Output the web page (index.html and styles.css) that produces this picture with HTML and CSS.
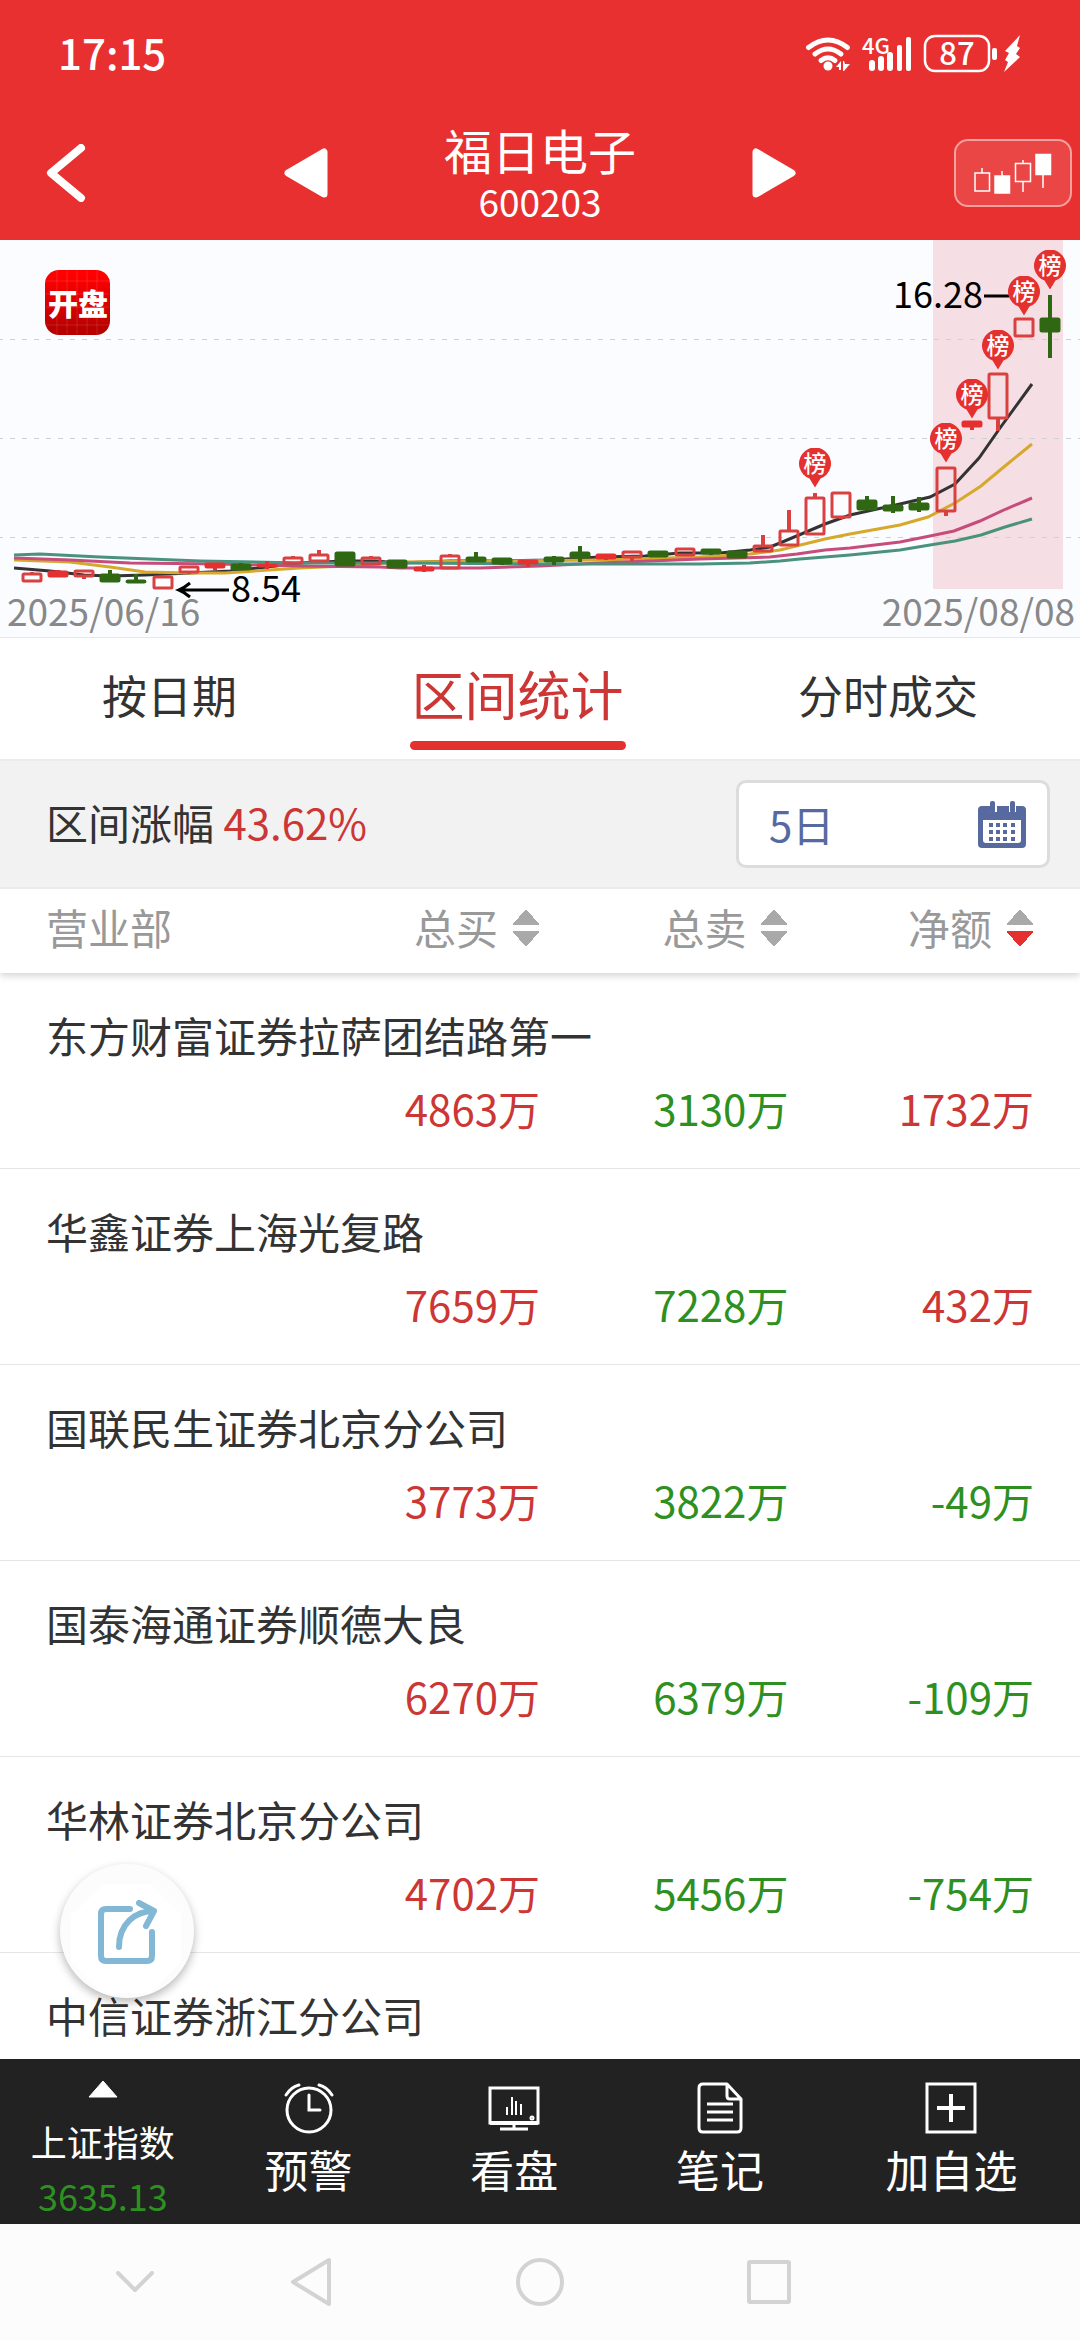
FILE: index.html
```html
<!DOCTYPE html>
<html lang="zh-CN">
<head>
  <meta charset="UTF-8">
  <meta name="viewport" content="width=device-width, initial-scale=1.0">
  <title>福日电子 600203</title>
  <link rel="stylesheet" href="styles.css">
</head>
<body>
  <header class="top">
    <div class="status-bar">
      <span class="clock">17:15</span>
      <svg class="status-icons" viewBox="804 18 220 70" width="220" height="70" fill="#fff">
        <g fill="none" stroke="#fff" stroke-width="5" stroke-linecap="round">
          <path d="M808.500 47.500Q828 32.500 847.500 47.500"/>
          <path d="M815 54Q828 44 841 54"/>
          <path d="M821 60.500Q828 55 835 60.500"/>
        </g>
        <circle cx="828" cy="66" r="4.500"/>
        <path d="M836 67l5-6v9h-2v-3zM843 61l1 0 1 3h5l-6 7h-1z"/>
        <text class="net" x="862" y="54">4G</text>
        <rect x="869" y="60" width="6" height="11" rx="3"/>
        <rect x="878" y="56" width="6" height="15" rx="3"/>
        <rect x="887" y="52" width="6" height="19" rx="3"/>
        <rect x="897" y="45" width="5" height="26" rx="2"/>
        <rect x="906" y="37" width="5" height="34" rx="2"/>
        <rect x="925" y="36" width="64" height="35" rx="10" fill="none" stroke="#fff" stroke-width="2.500"/>
        <rect x="992" y="48" width="5" height="12" rx="2"/>
        <text class="battery" x="957" y="65" text-anchor="middle">87</text>
        <path d="M1020 35l-15 16 4 2-4 7 3 2-4 10 16-15-4-3 4-6-3-2z"/>
      </svg>
    </div>
    <div class="title-bar">
      <button class="back" aria-label="返回">
        <svg viewBox="0 0 40 58" width="40" height="58"><path d="M35 4L5 29L35 54" fill="none" stroke="#fff" stroke-width="8" stroke-linecap="round" stroke-linejoin="round"/></svg>
      </button>
      <div class="switcher">
        <button aria-label="上一只">
          <svg viewBox="0 0 44 50" width="44" height="50"><path d="M40 4V46L4 25Z" fill="#fff" stroke="#fff" stroke-width="7" stroke-linejoin="round"/></svg>
        </button>
        <div class="stock">
          <h1>福日电子</h1>
          <p>600203</p>
        </div>
        <button aria-label="下一只">
          <svg viewBox="0 0 44 50" width="44" height="50"><path d="M4 4V46L40 25Z" fill="#fff" stroke="#fff" stroke-width="7" stroke-linejoin="round"/></svg>
        </button>
      </div>
      <button class="kline-btn" aria-label="K线">
        <svg viewBox="973 150 80 43" width="80" height="43" stroke="#fff" stroke-width="1.500" fill="none">
          <path d="M975 171h14.500v18H975zM982 171v-5M1015.500 161.500h15v18h-15zM1023 161v-3M1023 180v10"/>
          <path d="M995 174h14.500v17H995zM1002 174v-5M1036 152.500h14.500v20H1036zM1043 172v14" fill="#fff"/>
        </svg>
      </button>
    </div>
  </header>

  <svg class="chart" id="chart" viewBox="0 240 1080 397">
    <defs>
      <linearGradient id="logoFill" x1="0" y1="0" x2="0" y2="1">
        <stop offset="0.100" stop-color="#ff0000"/>
        <stop offset="0.900" stop-color="#b80000"/>
      </linearGradient>
      <symbol id="pin" viewBox="0 0 32 40">
        <path d="M16 39.500L10.500 30.500A16 16 0 1 1 21.500 30.500Z" fill="#e53030"/>
        <text x="16" y="24" text-anchor="middle">榜</text>
      </symbol>
    </defs>
    <rect class="range" x="933" y="240" width="130" height="349"/>
    <path class="grid" d="M-2 339.500H1080M-2 438.500H1080M-2 537.500H1080"/>
    <rect x="45" y="270" width="65" height="65" rx="14" fill="url(#logoFill)"/>
    <path class="logo-grid" d="M57 271v63M67 271v63M77 271v63M87 271v63M97 271v63M46 281h63M46 294h63M46 307h63M46 325h63"/>
    <text class="logo-text" x="78" y="315" text-anchor="middle">开盘</text>
    <text class="date" x="7" y="626">2025/06/16</text>
    <text class="date" x="1075" y="626" text-anchor="end">2025/08/08</text>
    <g class="averages">
      <polyline stroke="#333" points="14,568 50,571 84,575 110,576 145,575 190,573 230,571 267,567 300,563 345,561 375,561 400,563 450,561 500,561 550,560 600,557 645,556 680,553 720,553 750,550 770,547 780,543 825,524 850,515 900,504 930,497 955,484 979,458 1000,428 1032,384"/>
      <polyline stroke="#d6a92c" points="14,560 70,562 110,567 145,572 190,573 225,573 300,568 345,566 400,562 500,561 600,560 700,557 750,554 780,550 825,539 850,534 900,525 928,517 955,503 981,486 1005,466 1032,444"/>
      <polyline stroke="#c54c7b" points="14,558 70,560 130,563 220,564 300,566 380,567 400,568 480,568 540,566 600,563 700,559 770,557 797,554 825,550 850,548 900,542 930,536 954,531 980,521 1006,509 1032,498"/>
      <polyline stroke="#4a927c" points="14,555 40,554 100,557 200,561 300,563 400,563 560,564 700,564 750,563 780,561 800,559 850,555 900,550 930,545 955,541 981,535 1005,527 1032,519"/>
    </g>
    <g id="candles"></g>
    <path class="mark" d="M229 590H180M190 583Q184 588 179 590Q184 592 190 597M984 296H1009"/>
    <text class="price" x="231" y="602">8.54</text>
    <text class="price" x="983" y="308" text-anchor="end">16.28</text>
    <g id="pins"></g>
  </svg>

  <nav class="tabs">
    <button>按日期</button>
    <button class="active"><span>区间统计</span></button>
    <button>分时成交</button>
  </nav>

  <div class="filter">
    <p>区间涨幅 <span class="up">43.62%</span></p>
    <label class="period">
      <select aria-label="区间">
        <option>5日</option>
        <option>10日</option>
      </select>
      <svg viewBox="0 0 50 48" width="50" height="48" fill="#566a9f">
        <path d="M5 6h8v6h7V6h12v6h7V6h6q4 0 4 4v34q0 4-4 4H5q-4 0-4-4V10q0-4 4-4zM6 20v20q0 3 3 3h32q3 0 3-3V20z" fill-rule="evenodd"/>
        <rect x="13" y="1" width="5" height="12" rx="2"/>
        <rect x="33" y="1" width="5" height="12" rx="2"/>
        <path d="M12 23h4v4h-4zM19 23h4v4h-4zM26 23h4v4h-4zM34 23h4v4h-4zM12 30h4v4h-4zM19 30h4v4h-4zM26 30h4v4h-4zM34 30h4v4h-4zM12 37h4v4h-4zM19 37h4v4h-4zM26 37h4v4h-4zM34 37h4v4h-4z"/>
      </svg>
    </label>
  </div>

  <main>
    <div class="list">
      <table>
        <colgroup>
          <col>
          <col class="num">
          <col class="num">
          <col class="num last">
        </colgroup>
        <thead>
          <tr>
            <th scope="col">营业部</th>
            <th scope="col"><button class="sort">总买</button></th>
            <th scope="col"><button class="sort">总卖</button></th>
            <th scope="col"><button class="sort desc">净额</button></th>
          </tr>
        </thead>
        <tbody>
          <tr class="name"><th colspan="4">东方财富证券拉萨团结路第一</th></tr>
          <tr class="value"><td></td><td class="up">4863万</td><td class="down">3130万</td><td class="up">1732万</td></tr>
        </tbody>
        <tbody>
          <tr class="name"><th colspan="4">华鑫证券上海光复路</th></tr>
          <tr class="value"><td></td><td class="up">7659万</td><td class="down">7228万</td><td class="up">432万</td></tr>
        </tbody>
        <tbody>
          <tr class="name"><th colspan="4">国联民生证券北京分公司</th></tr>
          <tr class="value"><td></td><td class="up">3773万</td><td class="down">3822万</td><td class="down">-49万</td></tr>
        </tbody>
        <tbody>
          <tr class="name"><th colspan="4">国泰海通证券顺德大良</th></tr>
          <tr class="value"><td></td><td class="up">6270万</td><td class="down">6379万</td><td class="down">-109万</td></tr>
        </tbody>
        <tbody>
          <tr class="name"><th colspan="4">华林证券北京分公司</th></tr>
          <tr class="value"><td></td><td class="up">4702万</td><td class="down">5456万</td><td class="down">-754万</td></tr>
        </tbody>
        <tbody>
          <tr class="name"><th colspan="4">中信证券浙江分公司</th></tr>
        </tbody>
      </table>
    </div>
    <button class="share" aria-label="分享">
      <svg viewBox="0 0 134 134" width="134" height="134">
        <path d="M43 20H90L121 51V98L90 129H43L11 98V51Z" fill="#fff"/>
        <path d="M70 45H46Q41 45 41 50V92Q41 97 46 97H87Q92 97 92 92V68M59 83C59 60 75 47 94 47M79 39L94 47L86 62" fill="none" stroke="#82b8d5" stroke-width="6" stroke-linecap="round" stroke-linejoin="round"/>
      </svg>
    </button>
  </main>

  <footer class="toolbar">
    <a class="index" href="#index">
      <svg viewBox="0 0 30 18" width="30" height="18"><path d="M15 1L29 17H1Z" fill="#fff" stroke="#fff" stroke-linejoin="round"/></svg>
      <span>上证指数</span>
      <span class="down">3635.13</span>
    </a>
    <a href="#alert">
      <svg viewBox="0 0 52 52" width="52" height="52" fill="none" stroke="#fff" stroke-width="3" stroke-linecap="round">
        <circle cx="26" cy="28" r="22"/>
        <path d="M26 13V28H37M3 13Q8 5 16 3M49 13Q44 5 36 3"/>
      </svg>
      <span>预警</span>
    </a>
    <a href="#watch">
      <svg viewBox="0 0 52 52" width="52" height="52" fill="none" stroke="#fff" stroke-width="3">
        <path d="M2 6H50V41H2ZM26 41V46M12 47H40"/>
        <path d="M19 25V33M24 15V33M28 19V33M33 22V33" stroke-width="2"/>
        <path d="M2 41H50" stroke-width="4"/>
        <circle cx="44" cy="36" r="1"/>
      </svg>
      <span>看盘</span>
    </a>
    <a href="#notes">
      <svg viewBox="0 0 52 52" width="52" height="52" fill="none" stroke="#fff" stroke-width="3" stroke-linejoin="round">
        <path d="M8 2H33L47 17V46Q47 50 43 50H9Q5 50 5 46V6Q5 2 9 2ZM33 3V14Q33 17 36 17H46"/>
        <path d="M13 22H39M13 30H39M13 38H39"/>
      </svg>
      <span>笔记</span>
    </a>
    <a href="#add">
      <svg viewBox="0 0 52 52" width="52" height="52" fill="none" stroke="#fff">
        <rect x="2" y="2" width="48" height="48" stroke-width="3"/>
        <path d="M26 12V40M12 26H40" stroke-width="4"/>
      </svg>
      <span>加自选</span>
    </a>
  </footer>

  <div class="nav-bar">
    <button class="hide" aria-label="收起"><svg viewBox="0 0 38 22" width="38" height="22"><path d="M2 2L19 19L36 2"/></svg></button>
    <button aria-label="后退"><svg viewBox="0 0 42 50" width="42" height="50"><path d="M39 3V47L3 25Z"/></svg></button>
    <button aria-label="主页"><svg viewBox="0 0 50 50" width="50" height="50"><circle cx="25" cy="25" r="22"/></svg></button>
    <button aria-label="最近任务"><svg viewBox="0 0 46 46" width="46" height="46"><rect x="3" y="3" width="40" height="40" rx="1"/></svg></button>
  </div>

  <script>
    // type (u: hollow, r: solid red, d: green), body top, body bottom, wick top, wick bottom
    const candles = [
      ['u', 573, 582, 572, 582], ['r', 571, 577, 570, 577], ['u', 570, 577, 570, 579],
      ['d', 574, 582, 570, 582], ['d', 580, 583, 574, 583], ['u', 576, 589, 576, 589],
      ['u', 566, 573, 566, 574], ['r', 563, 568, 563, 570], ['d', 564, 570, 563, 570],
      ['r', 564, 567, 561, 569], ['u', 557, 564, 556, 564], ['u', 554, 562, 550, 562],
      ['d', 552, 566, 552, 566], ['u', 557, 565, 556, 565], ['d', 560, 568, 560, 568],
      ['r', 567, 571, 565, 572], ['u', 555, 569, 554, 569], ['d', 557, 562, 552, 562],
      ['d', 558, 564, 558, 565], ['r', 560, 564, 560, 567], ['d', 557, 562, 556, 565],
      ['d', 552, 558, 546, 562], ['r', 554, 559, 554, 560], ['u', 551, 558, 551, 561],
      ['d', 551, 557, 551, 557], ['u', 548, 556, 548, 556], ['d', 549, 554, 549, 555],
      ['d', 551, 558, 551, 558], ['u', 545, 552, 535, 552], ['u', 530, 546, 510, 546],
      ['u', 497, 535, 493, 535], ['u', 492, 518, 492, 519], ['d', 500, 510, 496, 510],
      ['d', 505, 511, 496, 513], ['d', 503, 510, 497, 512], ['u', 467, 512, 467, 516],
      ['r', 421, 427, 421, 430], ['u', 373, 419, 373, 431], ['u', 318, 337, 318, 337],
      ['d', 318, 332, 295, 358]
    ];
    // candle index -> pin top
    const pins = { 30: 448, 35: 423, 36: 379, 37: 330, 38: 276, 39: 250 };

    const centerX = i => 32 + i * 26.1;
    let shapes = '';
    candles.forEach(([type, top, bottom, high, low], i) => {
      const x = Math.round(centerX(i));
      shapes += `<g class="candle ${type}">
        <path d="M${x} ${high}V${top}M${x} ${bottom}V${low}"/>
        <rect x="${x - 9}" y="${top + 1}" width="18" height="${bottom - top - 2}" rx="1"/>
      </g>`;
    });
    document.getElementById('candles').innerHTML = shapes;

    document.getElementById('pins').innerHTML = Object.keys(pins).map(i =>
      `<use href="#pin" x="${Math.round(centerX(i)) - 16}" y="${pins[i]}" width="32" height="40"/>`
    ).join('');
  </script>
</body>
</html>
```
FILE: styles.css
```css
* {
  box-sizing: border-box;
}

body {
  margin: 0;
  height: 100vh;
  display: flex;
  flex-direction: column;
  background: #ffffff;
  color: #333333;
  font-family: "Noto Sans CJK SC", sans-serif;
  font-size: 42px;
}

button, select {
  font: inherit;
  color: inherit;
  background: none;
  border: 0;
  margin: 0;
  padding: 0;
  cursor: pointer;
}

h1, p {
  margin: 0;
  font-weight: 400;
}

svg {
  display: block;
  flex-shrink: 0;
}

.up {
  color: #cc3635;
}

.down {
  color: #2d9020;
}

/* header */
.top {
  background: #e83030;
  color: #ffffff;
}

.status-bar {
  height: 106px;
  padding: 0 56px 0 58px;
  display: flex;
  align-items: center;
  justify-content: space-between;
}

.clock {
  padding-bottom: 2px;
  font-size: 42px;
  font-weight: 500;
  line-height: 60px;
}

.net {
  font-size: 22px;
  font-weight: 500;
}

.battery {
  font-size: 31px;
  font-weight: 500;
}

.title-bar {
  height: 134px;
  padding: 0 8px 0 46px;
  display: flex;
  align-items: center;
  justify-content: space-between;
  position: relative;
}

.switcher {
  position: absolute;
  left: 50%;
  transform: translateX(-50%);
  width: 512px;
  display: flex;
  align-items: center;
  justify-content: space-between;
}

.stock {
  text-align: center;
}

.stock h1 {
  font-size: 48px;
  line-height: 56px;
}

.stock p {
  font-size: 37px;
  line-height: 48px;
}

.kline-btn {
  width: 118px;
  height: 68px;
  display: flex;
  align-items: center;
  justify-content: center;
  border: 2px solid #f4a0a0;
  border-radius: 14px;
  background: #ea4646;
}

/* chart */
.chart {
  width: 100%;
  background: #fbfcff;
  border-bottom: 1px solid #e6e8ec;
}

.chart .range {
  fill: #f6dfe4;
}

.chart .grid {
  stroke: #cdd0d6;
  stroke-dasharray: 5 7;
}

.chart .logo-grid {
  stroke: #ffffff;
  stroke-opacity: 0.12;
}

.chart .logo-text {
  fill: #ffffff;
  font-size: 30px;
  font-weight: 900;
}

.chart .date {
  fill: #888888;
  font-size: 37px;
}

.chart .price {
  fill: #000000;
  font-size: 36px;
}

.chart .mark {
  fill: none;
  stroke: #000000;
  stroke-width: 3;
}

.averages polyline {
  fill: none;
  stroke-width: 3;
}

.candle {
  fill: none;
  stroke: #d94040;
  stroke-width: 3;
}

.candle path {
  stroke-width: 4;
}

.candle.r {
  fill: #e53030;
  stroke: #e53030;
}

.candle.d {
  fill: #2f6713;
  stroke: #2f6713;
}

#pin text {
  fill: #ffffff;
  font-size: 23px;
  font-weight: 500;
}

/* tabs */
.tabs {
  height: 123px;
  padding: 0 54px;
  display: flex;
  justify-content: space-between;
  border-bottom: 2px solid #ececec;
  font-size: 45px;
}

.tabs button {
  padding: 0 48px 8px;
}

.tabs .active {
  padding: 0;
  color: #cc3635;
  font-size: 53px;
}

.tabs .active span {
  display: block;
  height: 121px;
  padding: 0 2px;
  line-height: 110px;
  position: relative;
}

.tabs .active span::after {
  content: '';
  position: absolute;
  left: 0;
  right: 0;
  bottom: 9px;
  height: 9px;
  border-radius: 5px;
  background: #e53030;
}

/* filter */
.filter {
  height: 128px;
  padding: 0 30px 0 46px;
  display: flex;
  align-items: center;
  justify-content: space-between;
  background: #f2f2f2;
  border-bottom: 2px solid #ebebeb;
}

.filter p {
  padding-bottom: 6px;
}

.period {
  width: 314px;
  height: 88px;
  padding: 0 20px 0 30px;
  display: flex;
  align-items: center;
  background: #ffffff;
  border: 3px solid #dcdcdc;
  border-radius: 10px;
}

.period select {
  flex: 1;
  appearance: none;
  padding-bottom: 2px;
  color: #566a9f;
}

/* list */
main {
  flex: 1;
  min-height: 0;
  position: relative;
}

.list {
  height: 100%;
  overflow-y: auto;
  scrollbar-width: none;
}

table {
  width: 100%;
  table-layout: fixed;
  border-collapse: separate;
  border-spacing: 0;
}

.num {
  width: 23%;
}

.last {
  width: 27%;
}

th, td {
  padding: 0;
  font-weight: 400;
  text-align: right;
}

th:first-child {
  padding-left: 46px;
  text-align: left;
}

th:last-child, td:last-child {
  padding-right: 46px;
}

thead {
  position: sticky;
  top: 0;
  background: #ffffff;
  color: #999999;
  box-shadow: 0 2px 8px rgba(0, 0, 0, 0.2);
}

thead th {
  height: 84px;
  padding-bottom: 8px;
  line-height: 56px;
}

.sort {
  display: inline-flex;
  align-items: center;
  gap: 14px;
}

.sort::after {
  content: '';
  width: 28px;
  height: 38px;
  margin-top: 2px;
  background:
    conic-gradient(from 139deg at 50% 0, #a9a9a9 82deg, transparent 0) top / 28px 16px no-repeat,
    conic-gradient(from -41deg at 50% 100%, #a9a9a9 82deg, transparent 0) bottom / 28px 16px no-repeat;
}

.sort.desc::after {
  background:
    conic-gradient(from 139deg at 50% 0, #a9a9a9 82deg, transparent 0) top / 28px 16px no-repeat,
    conic-gradient(from -41deg at 50% 100%, #e53030 82deg, transparent 0) bottom / 28px 16px no-repeat;
}

.name th {
  padding-top: 34px;
  line-height: 56px;
}

.value td {
  height: 106px;
  padding-top: 17px;
  padding-bottom: 32px;
  line-height: 56px;
  border-bottom: 1px solid #e6e6e6;
}

.share {
  position: absolute;
  left: 60px;
  bottom: 61px;
  border-radius: 50%;
  background: #fcfcfc;
  box-shadow: 0 4px 10px rgba(0, 0, 0, 0.28);
}

/* bottom */
.toolbar {
  height: 165px;
  display: grid;
  grid-template-columns: 4fr 4fr 4fr 4fr 5fr;
  background: #222222;
}

.toolbar a {
  padding-top: 23px;
  display: flex;
  flex-direction: column;
  align-items: center;
  color: #ffffff;
  font-size: 44px;
  line-height: 70px;
  text-decoration: none;
}

.toolbar .index {
  padding-top: 21px;
  gap: 16px;
  font-size: 36px;
  line-height: 54px;
}

.toolbar .index span {
  height: 38px;
}

.toolbar .index .down {
  color: #2d9020;
}

.nav-bar {
  height: 116px;
  display: grid;
  grid-template-columns: 6fr 7fr 7fr 7fr 6fr;
  background: #fcfcfc;
}

.nav-bar button {
  display: flex;
  align-items: center;
  justify-content: center;
}

.nav-bar .hide {
  justify-content: flex-end;
  padding-right: 42px;
}

.nav-bar svg {
  fill: none;
  stroke: #d3d3d3;
  stroke-width: 4;
  stroke-linecap: round;
  stroke-linejoin: round;
}
```
